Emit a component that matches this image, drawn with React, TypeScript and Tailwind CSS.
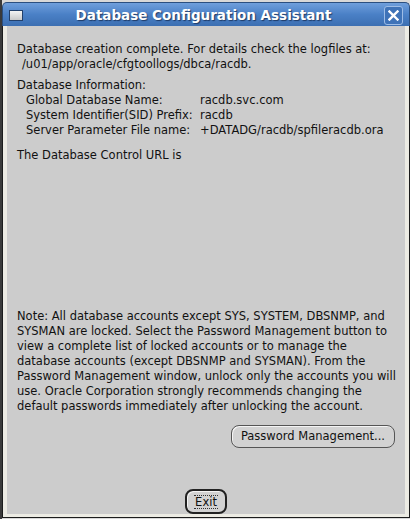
import React from "react";

const font = { fontFamily: '"DejaVu Sans", "Lucida Sans", sans-serif' };

const InfoRow = ({ label, value }: { label: string; value: string }) => (
  <div className="flex whitespace-nowrap">
    <span className="w-[183px] shrink-0 pl-[9px]">{label}</span>
    <span>{value}</span>
  </div>
);

const App = () => {
  return (
    <div
      className="flex h-[519px] w-[410px] overflow-hidden bg-[#d8d8d8] text-[11.5px] leading-[15px] text-[#111]"
      style={font}
    >
      <div className="w-[2px] bg-[#3a3a3a]" />
      <div className="flex h-[518px] w-[408px] flex-col pt-[2px]">
        {/* title bar */}
        <div className="flex h-[26px] items-center rounded-t-[5px] border border-b-0 border-[#2b4f80] bg-gradient-to-b from-[#6f9fdc] via-[#4a80c6] to-[#3c6fb2] px-[6px] pt-[2px]">
          <div className="h-[11px] w-[14px] border border-[#22406b] bg-gradient-to-b from-[#f4f4f4] to-[#c9c9c9]" />
          <div
            className="flex-1 text-center text-[13.5px] font-bold text-white [text-shadow:1px_1px_1px_#1e3a66]"
            style={font}
          >
            Database Configuration Assistant
          </div>
          <div className="flex h-[19px] w-[19px] items-center justify-center rounded-[3px] border border-[#9ebde6] bg-[#3f73b8]">
            <svg width="11" height="11" viewBox="0 0 11 11">
              <path d="M1.5 1.5 L9.5 9.5 M9.5 1.5 L1.5 9.5" stroke="#fff" strokeWidth="2.4" strokeLinecap="square" />
            </svg>
          </div>
        </div>

        {/* body */}
        <div className="flex flex-1 flex-col border-x border-b border-x-[#1c1c1c] border-b-[#1c1c1c] bg-[#ecebe3]">
          <div className="mx-[4px] mb-[3px] flex flex-1 flex-col bg-[#cccccc] pl-[10px] pr-[8px] pt-[16px]">
            <div>Database creation complete. For details check the logfiles at:</div>
            <div className="pl-[5px]">/u01/app/oracle/cfgtoollogs/dbca/racdb.</div>

            <div className="mt-[6px]">Database Information:</div>
            <InfoRow label="Global Database Name:" value="racdb.svc.com" />
            <InfoRow label="System Identifier(SID) Prefix:" value="racdb" />
            <InfoRow label="Server Parameter File name:" value="+DATADG/racdb/spfileracdb.ora" />

            <div className="mt-[10px]">The Database Control URL is</div>

            <div className="mt-[146px]">
              Note: All database accounts except SYS, SYSTEM, DBSNMP, and SYSMAN are locked. Select the
              Password Management button to view a complete list of locked accounts or to manage the
              database accounts (except DBSNMP and SYSMAN). From the Password Management window, unlock
              only the accounts you will use. Oracle Corporation strongly recommends changing the default
              passwords immediately after unlocking the account.
            </div>

            <div className="mt-[11px] flex justify-end pr-[2px]">
              <button
                className="h-[23px] rounded-[8px] border border-[#555] bg-[#d2d2d2] px-[9px] text-[11.5px] text-[#111] shadow-[inset_1px_1px_0_#f4f4f4]"
                style={font}
              >
                Password Management...
              </button>
            </div>

            <div className="mt-[41px] flex justify-center pr-[2px]">
              <button
                className="flex h-[25px] w-[42px] items-center justify-center rounded-[8px] border-2 border-[#222] bg-[#d2d2d2] text-[11.5px] text-[#111] shadow-[inset_1px_1px_0_#f4f4f4]"
                style={font}
              >
                <span className="border-y border-dotted border-[#333] px-[1px] leading-[12px]">Exit</span>
              </button>
            </div>
          </div>
        </div>
      </div>
    </div>
  );
};

export default App;
